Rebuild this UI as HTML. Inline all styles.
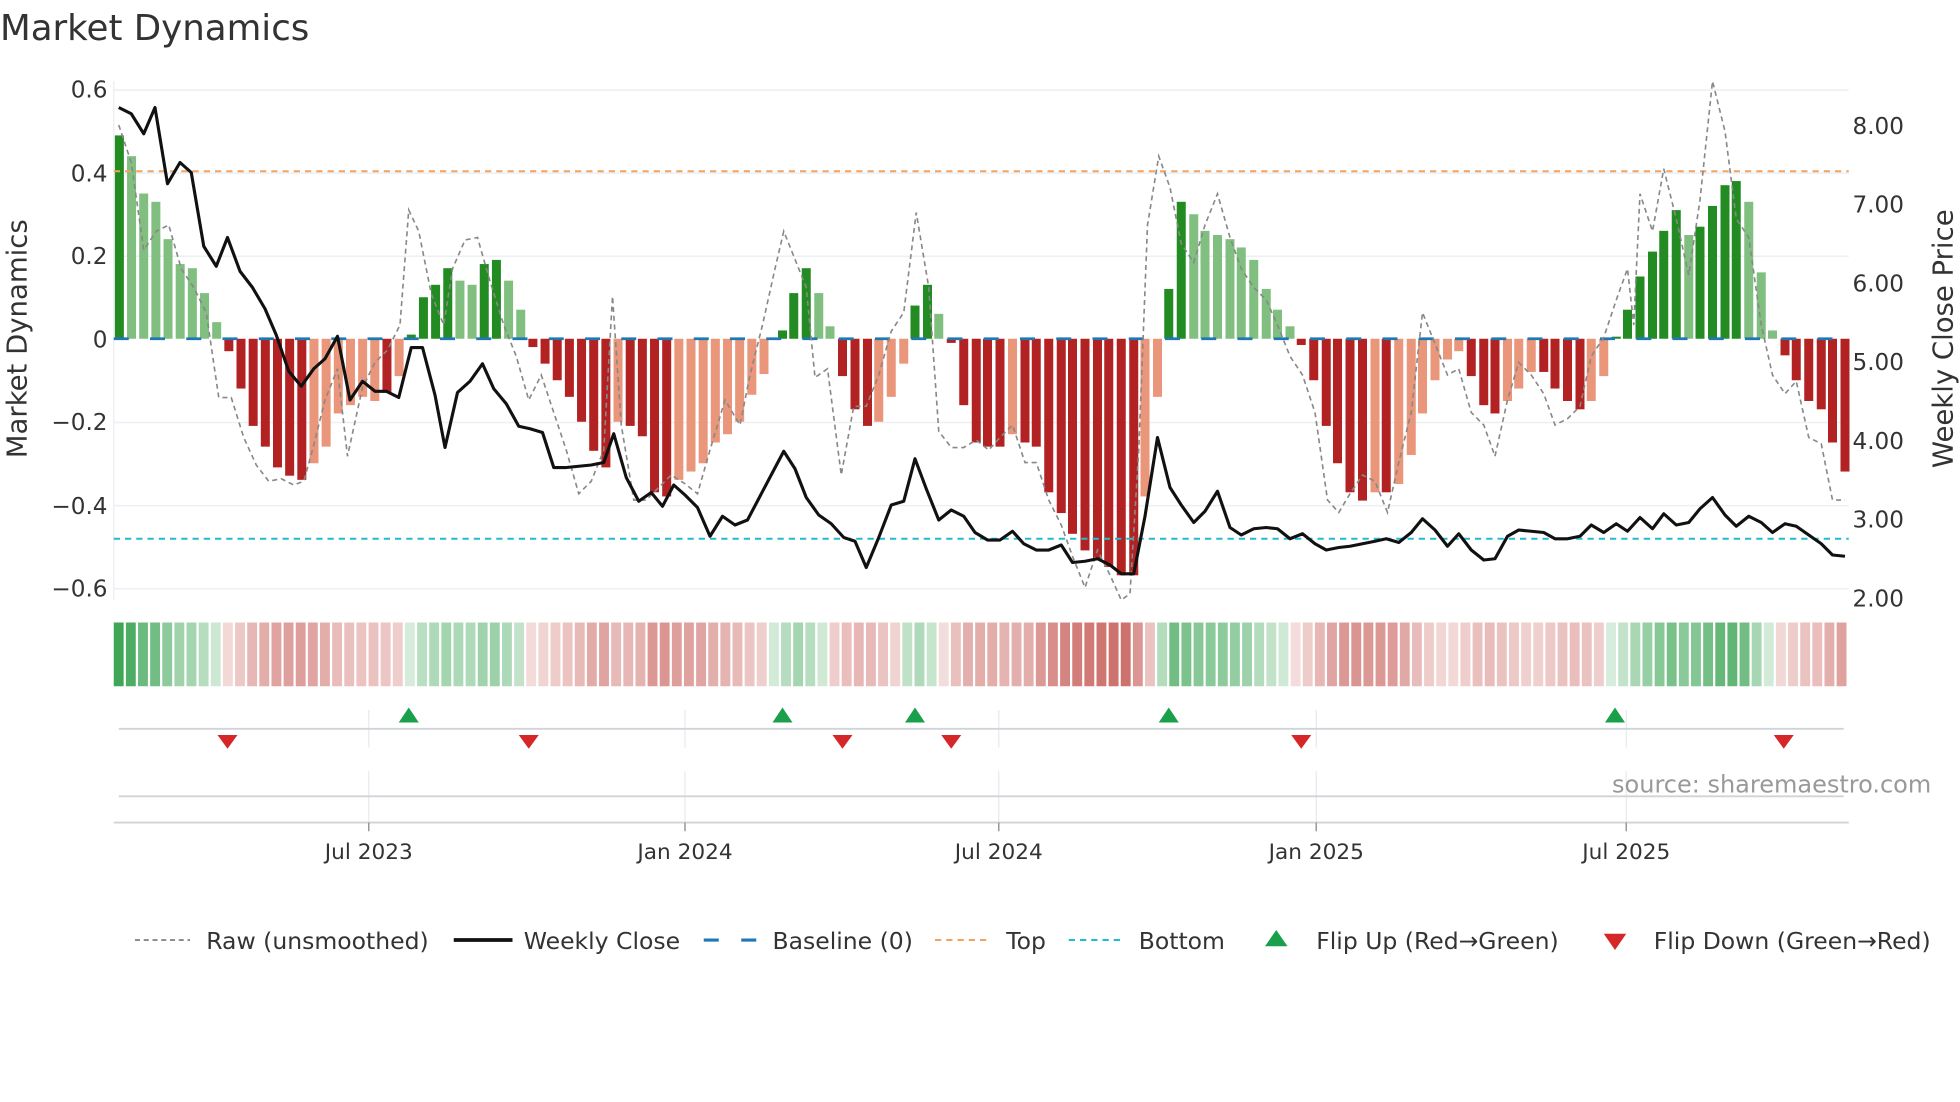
<!DOCTYPE html>
<html><head><meta charset="utf-8"><style>
html,body{margin:0;padding:0;background:#fff;width:1960px;height:1102px;overflow:hidden}
svg{display:block}
text{font-family:"DejaVu Sans","Liberation Sans",sans-serif;fill:#333}
</style></head><body>
<svg id="s" width="1960" height="1102" viewBox="0 0 1568 881.6" xmlns="http://www.w3.org/2000/svg">
<text x="0" y="32" font-size="28.5">Market Dynamics</text>
<g stroke="#eceff3" stroke-width="1.2">
<line x1="91" x2="1479" y1="72" y2="72"/><line x1="91" x2="1479" y1="138.5" y2="138.5"/>
<line x1="91" x2="1479" y1="205" y2="205"/><line x1="91" x2="1479" y1="338" y2="338"/>
<line x1="91" x2="1479" y1="404.5" y2="404.5"/><line x1="91" x2="1479" y1="471" y2="471"/>
<line x1="91" x2="91" y1="65" y2="480"/>
</g>
<g font-size="18.5" text-anchor="end">
<text x="86" y="78">0.6</text><text x="86" y="145">0.4</text><text x="86" y="211">0.2</text>
<text x="86" y="278">0</text><text x="86" y="344">−0.2</text><text x="86" y="411">−0.4</text><text x="86" y="477">−0.6</text>
</g>
<g font-size="18.5">
<text x="1482" y="107">8.00</text><text x="1482" y="170">7.00</text><text x="1482" y="233">6.00</text>
<text x="1482" y="296">5.00</text><text x="1482" y="359">4.00</text><text x="1482" y="422">3.00</text><text x="1482" y="485">2.00</text>
</g>
<text transform="translate(21,271) rotate(-90)" font-size="22" text-anchor="middle">Market Dynamics</text>
<text transform="translate(1562,271) rotate(-90)" font-size="22" text-anchor="middle">Weekly Close Price</text>
<g id="bars"></g>
<g id="heat"></g>
<line x1="91" x2="1479" y1="271" y2="271" stroke="#1f77b4" stroke-width="2.2" stroke-dasharray="12 17"/>
<line x1="91" x2="1479" y1="137" y2="137" stroke="#f4a261" stroke-width="1.6" stroke-dasharray="5 4"/>
<line x1="91" x2="1479" y1="431" y2="431" stroke="#22bcd0" stroke-width="1.6" stroke-dasharray="5 4"/>
<polyline id="raw" fill="none" stroke="#888" stroke-width="1.3" stroke-dasharray="4 3"/>
<polyline id="close" fill="none" stroke="#111" stroke-width="2.5" stroke-linejoin="round"/>
<g stroke="#e8eaee" stroke-width="1">
<line x1="295" x2="295" y1="568" y2="598"/><line x1="548" x2="548" y1="568" y2="598"/><line x1="799" x2="799" y1="568" y2="598"/><line x1="1053" x2="1053" y1="568" y2="598"/><line x1="1301" x2="1301" y1="568" y2="598"/>
<line x1="295" x2="295" y1="617" y2="658"/><line x1="548" x2="548" y1="617" y2="658"/><line x1="799" x2="799" y1="617" y2="658"/><line x1="1053" x2="1053" y1="617" y2="658"/><line x1="1301" x2="1301" y1="617" y2="658"/>
</g>
<g stroke="#d0d3d8" stroke-width="1.5">
<line x1="95" x2="1475" y1="583" y2="583"/><line x1="95" x2="1475" y1="637" y2="637"/><line x1="91" x2="1479" y1="658" y2="658"/>
</g>
<g stroke="#999" stroke-width="1.2">
<line x1="295" x2="295" y1="658" y2="665"/><line x1="548" x2="548" y1="658" y2="665"/><line x1="799" x2="799" y1="658" y2="665"/><line x1="1053" x2="1053" y1="658" y2="665"/><line x1="1301" x2="1301" y1="658" y2="665"/>
</g>
<g id="mk"></g>
<text x="1545" y="634" font-size="19.2" text-anchor="end" style="fill:#999">source: sharemaestro.com</text>
<g font-size="17.3" text-anchor="middle">
<text x="295" y="687">Jul 2023</text><text x="548" y="687">Jan 2024</text><text x="799" y="687">Jul 2024</text><text x="1053" y="687">Jan 2025</text><text x="1301" y="687">Jul 2025</text>
</g>
<g font-size="18.8">
<line x1="108" x2="152" y1="752" y2="752" stroke="#888" stroke-width="1.5" stroke-dasharray="4 3"/>
<text x="165" y="759">Raw (unsmoothed)</text>
<line x1="363" x2="410" y1="752" y2="752" stroke="#111" stroke-width="3"/>
<text x="419" y="759">Weekly Close</text>
<line x1="563" x2="606" y1="752" y2="752" stroke="#1f77b4" stroke-width="2.5" stroke-dasharray="12 18"/>
<text x="618" y="759">Baseline (0)</text>
<line x1="748" x2="792" y1="752" y2="752" stroke="#f4a261" stroke-width="1.6" stroke-dasharray="5 4"/>
<text x="805" y="759">Top</text>
<line x1="855" x2="898" y1="752" y2="752" stroke="#22bcd0" stroke-width="1.6" stroke-dasharray="5 4"/>
<text x="911" y="759">Bottom</text>
<polygon points="1012,757 1030,757 1021,744" fill="#1a9f4a"/>
<text x="1053" y="759">Flip Up (Red→Green)</text>
<polygon points="1283,747 1301,747 1292,760" fill="#d62728"/>
<text x="1323" y="759">Flip Down (Green→Red)</text>
</g>
</svg>
<script>
var NS="http://www.w3.org/2000/svg";
function el(t,a,p){var e=document.createElementNS(NS,t);for(var k in a)e.setAttribute(k,a[k]);p.appendChild(e);return e;}
var first=[[.49,'G'],[.44,'g'],[.35,'g'],[.33,'g'],[.24,'g'],[.18,'g'],[.17,'g'],[.11,'g'],[.04,'g'],
[-.03,'R'],[-.12,'R'],[-.21,'R'],[-.26,'R'],[-.31,'R'],[-.33,'R'],[-.34,'R'],[-.30,'r'],[-.26,'r'],[-.18,'r'],[-.16,'r'],[-.14,'r'],[-.15,'r'],[-.13,'R'],[-.09,'r'],
[.01,'G'],[.10,'G'],[.13,'G'],[.17,'G'],[.14,'g'],[.13,'g'],[.18,'G'],[.19,'G'],[.14,'g'],[.07,'g'],
[-.02,'R'],[-.06,'R'],[-.10,'R'],[-.14,'R'],[-.20,'R'],[-.27,'R'],[-.31,'R'],[-.20,'r'],[-.21,'R'],[-.235,'R'],[-.37,'R'],[-.38,'R'],[-.34,'r'],[-.32,'r'],[-.30,'r'],[-.25,'r'],[-.23,'r'],[-.20,'r'],[-.135,'r'],[-.085,'r']];
var bars=[];first.forEach(function(b,i){bars.push([95.5+9.73*i,b[0],b[1]]);});
var rest=[[626,.02,'G'],[635,.11,'G'],[645,.17,'G'],[655,.11,'g'],[664,.03,'g'],[674,-.09,'R'],[684,-.17,'R'],[694,-.21,'R'],[703,-.20,'r'],[713,-.14,'r'],[723,-.06,'r'],[732,.08,'G'],[742,.13,'G'],[751,.06,'g'],
[761,-.01,'R'],[771,-.16,'R'],[781,-.25,'R'],[790,-.26,'R'],[800,-.26,'R'],[810,-.23,'r'],[820,-.25,'R'],[829,-.26,'R'],[839,-.37,'R'],[849,-.42,'R'],[858,-.47,'R'],[868,-.51,'R'],[878,-.53,'R'],[887,-.55,'R'],[897,-.57,'R'],[907,-.57,'R'],[916,-.38,'r'],[926,-.14,'r'],
[935,.12,'G'],[945,.33,'G'],[955,.30,'g'],[964,.26,'g'],[974,.25,'g'],[984,.24,'g'],[993,.22,'g'],[1003,.19,'g'],[1013,.12,'g'],[1022,.07,'g'],[1032,.03,'g'],
[1041,-.015,'R'],[1051,-.10,'R'],[1061,-.21,'R'],[1070,-.30,'R'],[1080,-.37,'R'],[1090,-.39,'R'],[1100,-.37,'r'],[1109,-.37,'R'],[1119,-.35,'r'],[1129,-.28,'r'],[1138,-.18,'r'],[1148,-.10,'r'],[1158,-.05,'r'],[1167,-.03,'r'],[1177,-.09,'R'],[1187,-.16,'R'],[1196,-.18,'R'],[1206,-.15,'r'],[1215,-.12,'r'],[1225,-.08,'r'],[1235,-.08,'R'],[1244,-.12,'R'],[1254,-.15,'R'],[1264,-.17,'R'],[1273,-.15,'r'],[1283,-.09,'r'],
[1293,.005,'G'],[1302,.07,'G'],[1312,.15,'G'],[1322,.21,'G'],[1331,.26,'G'],[1341,.31,'G'],[1351,.25,'g'],[1360,.27,'G'],[1370,.32,'G'],[1380,.37,'G'],[1389,.38,'G'],[1399,.33,'g'],[1409,.16,'g'],[1418,.02,'g'],
[1428,-.04,'R'],[1437,-.10,'R'],[1447,-.15,'R'],[1457,-.17,'R'],[1466,-.25,'R'],[1476,-.32,'R']];
bars=bars.concat(rest);
var col={G:'#228b22',g:'#80bf80',R:'#b22222',r:'#e9967a'};
var bg=document.getElementById('bars'),hg=document.getElementById('heat');
var N=bars.length,cw=1388/N;
bars.forEach(function(b,i){var h=Math.abs(b[1])*332,y=b[1]>=0?271-h:271;
el('rect',{x:b[0]-3.6,y:y,width:7.2,height:Math.max(h,0.6),fill:col[b[2]]},bg);
var a=Math.min(1,0.2+Math.abs(b[1])*1.6);
var c=b[1]>=0?'rgba(60,165,85,'+a+')':'rgba(200,95,90,'+Math.min(1,0.2+Math.abs(b[1])*1.2)+')';
el('rect',{x:91+i*cw,y:498,width:cw-1.8,height:51,fill:c},hg);});
var raw=[[95,100],[105,130],[115,200],[125,185],[135,180],[145,215],[155,230],[165,250],[175,318],[185,318],[195,350],[205,372],[215,385],[225,383],[235,388],[243,385],[250,360],[260,320],[270,295],[278,365],[290,310],[300,290],[310,280],[320,260],[327,168],[335,185],[345,235],[355,260],[362,215],[372,192],[382,190],[392,225],[403,260],[413,285],[423,320],[433,300],[443,330],[453,360],[463,395],[473,385],[483,360],[490,237],[497,340],[507,400],[517,400],[527,390],[537,380],[548,387],[558,395],[568,360],[580,320],[592,340],[600,300],[610,260],[620,215],[627,185],[637,210],[645,230],[652,302],[662,295],[673,380],[683,325],[693,325],[703,300],[713,265],[723,250],[733,170],[743,230],[751,345],[761,358],[771,358],[781,352],[791,360],[800,350],[810,340],[820,370],[829,370],[839,400],[849,420],[858,445],[868,470],[878,440],[888,460],[897,480],[904,475],[911,360],[918,180],[927,125],[936,150],[945,195],[955,210],[964,180],[974,155],[984,190],[993,215],[1003,230],[1013,240],[1022,260],[1032,285],[1042,300],[1052,330],[1062,400],[1071,410],[1080,395],[1090,380],[1100,385],[1110,410],[1119,370],[1129,330],[1138,250],[1148,275],[1158,300],[1167,295],[1177,330],[1187,340],[1196,365],[1206,320],[1215,290],[1225,300],[1235,315],[1244,340],[1254,335],[1264,325],[1273,285],[1283,270],[1293,240],[1302,215],[1307,260],[1312,155],[1322,185],[1331,135],[1341,175],[1351,220],[1360,160],[1370,65],[1380,105],[1389,175],[1399,190],[1409,260],[1418,300],[1428,315],[1437,305],[1447,350],[1457,355],[1466,400],[1476,400]];
var cl=[[95,86],[105,91],[115,107],[124,86],[134,147],[144,130],[153,138],[163,197],[173,213],[182,190],[192,217],[202,230],[212,247],[221,268],[231,297],[241,309],[251,295],[260,287],[270,269],[280,320],[290,305],[300,313],[309,313],[319,318],[329,278],[338,278],[348,316],[356,358],[366,314],[376,305],[386,291],[395,311],[405,323],[415,341],[424,343],[434,346],[443,374],[453,374],[463,373],[473,372],[483,370],[491,347],[501,382],[511,401],[521,394],[530,405],[539,388],[548,396],[558,406],[568,429],[578,413],[588,420],[598,416],[608,397],[618,378],[627,361],[636,375],[645,398],[655,412],[665,419],[675,430],[684,433],[693,454],[703,430],[713,404],[723,401],[732,367],[741,391],[751,416],[761,408],[771,413],[780,426],[790,432],[800,432],[810,425],[819,435],[829,440],[839,440],[849,436],[858,450],[868,449],[878,447],[888,452],[897,459],[907,459],[916,413],[926,350],[936,390],[945,404],[955,418],[964,409],[974,393],[984,422],[993,428],[1003,423],[1013,422],[1022,423],[1032,431],[1042,427],[1052,435],[1061,440],[1071,438],[1080,437],[1090,435],[1100,433],[1109,431],[1119,434],[1129,426],[1138,415],[1148,424],[1158,437],[1167,427],[1177,440],[1187,448],[1196,447],[1206,429],[1215,424],[1225,425],[1235,426],[1244,431],[1254,431],[1264,429],[1273,420],[1283,426],[1293,419],[1302,425],[1312,414],[1322,423],[1331,411],[1341,420],[1351,418],[1360,407],[1370,398],[1380,412],[1389,421],[1399,413],[1409,418],[1418,426],[1428,419],[1437,421],[1447,428],[1457,435],[1466,444],[1476,445]];
function pts(a){return a.map(function(p){return p[0]+','+p[1];}).join(' ');}
document.getElementById('raw').setAttribute('points',pts(raw));
document.getElementById('close').setAttribute('points',pts(cl));
var mk=document.getElementById('mk');
[327,626,732,935,1292].forEach(function(x){el('polygon',{points:(x-8)+',578 '+(x+8)+',578 '+x+',566',fill:'#1a9f4a'},mk);});
[182,423,674,761,1041,1427].forEach(function(x){el('polygon',{points:(x-8)+',588 '+(x+8)+',588 '+x+',599',fill:'#d62728'},mk);});
</script>
</body></html>
